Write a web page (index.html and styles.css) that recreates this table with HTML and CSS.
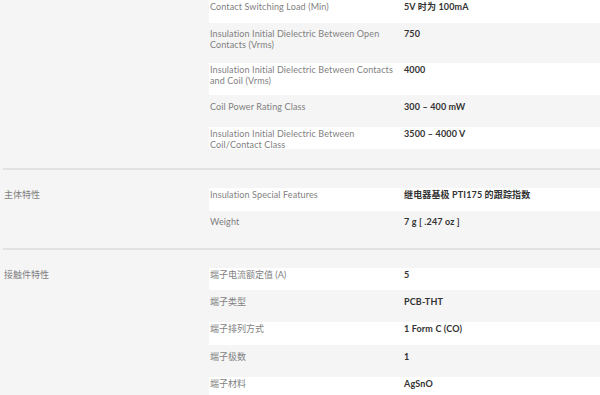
FILE: index.html
```html
<!DOCTYPE html>
<html lang="zh">
<head>
<meta charset="utf-8">
<title>Specs</title>
<link rel="stylesheet" href="styles.css">
</head>
<body>
<div class="specs">
  <section class="section first">
    <div class="group"></div>
    <div class="rows">
      <div class="row white"><div class="label">Contact Switching Load (Min)</div><div class="value">5V 时为 100mA</div></div>
      <div class="row"><div class="label">Insulation Initial Dielectric Between Open<br>Contacts (Vrms)</div><div class="value">750</div></div>
      <div class="row white"><div class="label">Insulation Initial Dielectric Between Contacts<br>and Coil (Vrms)</div><div class="value">4000</div></div>
      <div class="row"><div class="label">Coil Power Rating Class</div><div class="value">300 – 400 mW</div></div>
      <div class="row white clip"><div class="label">Insulation Initial Dielectric Between<br>Coil/Contact Class</div><div class="value">3500 – 4000 V</div></div>
    </div>
  </section>
  <section class="section">
    <div class="group">主体特性</div>
    <div class="rows">
      <div class="row white"><div class="label">Insulation Special Features</div><div class="value">继电器基极 PTI175 的跟踪指数</div></div>
      <div class="row"><div class="label">Weight</div><div class="value">7 g [ .247 oz ]</div></div>
    </div>
  </section>
  <section class="section">
    <div class="group">接触件特性</div>
    <div class="rows">
      <div class="row white"><div class="label cjk">端子电流额定值 (A)</div><div class="value">5</div></div>
      <div class="row"><div class="label cjk">端子类型</div><div class="value">PCB-THT</div></div>
      <div class="row white"><div class="label cjk">端子排列方式</div><div class="value">1 Form C (CO)</div></div>
      <div class="row"><div class="label cjk">端子极数</div><div class="value">1</div></div>
      <div class="row white"><div class="label cjk">端子材料</div><div class="value">AgSnO</div></div>
    </div>
  </section>
</div>
</body>
</html>
```
FILE: styles.css
```css
* { box-sizing: border-box; }
html, body {
  margin: 0;
  padding: 0;
  background: #f5f5f5;
  overflow: hidden;
}
body {
  font-family: Lato, "Noto Sans CJK SC", sans-serif;
  font-size: 9px;
  line-height: 11px;
  color: #7f7f7f;
}
.section {
  display: grid;
  grid-template-columns: 206px 1fr;
  margin-left: 3px;
  padding: 18px 0 5px;
  border-top: 2px solid #e2e2e2;
}
.section.first {
  border-top: 0;
  padding-top: 0;
}
.group {
  padding: 1px 0 0 1px;
}
.rows {
  display: flex;
  flex-direction: column;
  gap: 4.65px;
  padding-bottom: 4.65px;
}
.row {
  display: grid;
  grid-template-columns: 194px 1fr;
  min-height: 22.7px;
  padding: 1px 0 8.5px 1px;
}
.row.white {
  background: #fff;
}
.row.white.clip {
  background: linear-gradient(#fff 22.3px, transparent 22.3px);
}
.label {
  letter-spacing: 0.12px;
}
.label.cjk {
  letter-spacing: 0;
}
.value {
  font-weight: 700;
  color: #333;
  letter-spacing: 0.15px;
}
```
